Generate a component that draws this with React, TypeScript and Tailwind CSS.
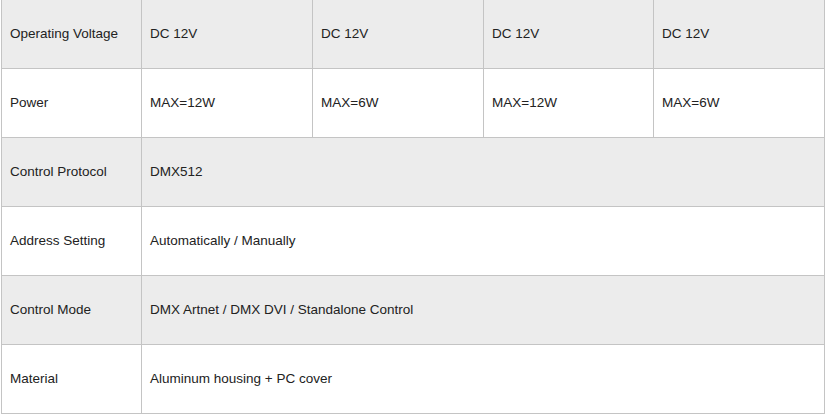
type Row = {
  label: string;
  values: string[];
  shaded: boolean;
};

const rows: Row[] = [
  { label: "Operating Voltage", values: ["DC 12V", "DC 12V", "DC 12V", "DC 12V"], shaded: true },
  { label: "Power", values: ["MAX=12W", "MAX=6W", "MAX=12W", "MAX=6W"], shaded: false },
  { label: "Control Protocol", values: ["DMX512"], shaded: true },
  { label: "Address Setting", values: ["Automatically / Manually"], shaded: false },
  { label: "Control Mode", values: ["DMX Artnet / DMX DVI / Standalone Control"], shaded: true },
  { label: "Material", values: ["Aluminum housing + PC cover"], shaded: false },
];

const cell = "border border-[#c4c4c4] px-2 align-middle";

export default function App() {
  return (
    <div className="h-[415px] w-[825px] overflow-hidden bg-white font-['Liberation_Sans',Arial,sans-serif] text-[13.5px] text-[#222]">
      <table className="-mt-px ml-px w-[823px] table-fixed border-collapse">
        <colgroup>
          <col className="w-[140px]" />
          <col className="w-[171px]" />
          <col className="w-[171px]" />
          <col className="w-[170px]" />
          <col className="w-[171px]" />
        </colgroup>
        <tbody>
          {rows.map((row) => (
            <tr key={row.label} className={`h-[69px] ${row.shaded ? "bg-[#ececec]" : "bg-white"}`}>
              <td className={cell}>{row.label}</td>
              {row.values.length === 1 ? (
                <td colSpan={4} className={cell}>
                  {row.values[0]}
                </td>
              ) : (
                row.values.map((v, i) => (
                  <td key={i} className={cell}>
                    {v}
                  </td>
                ))
              )}
            </tr>
          ))}
        </tbody>
      </table>
    </div>
  );
}
